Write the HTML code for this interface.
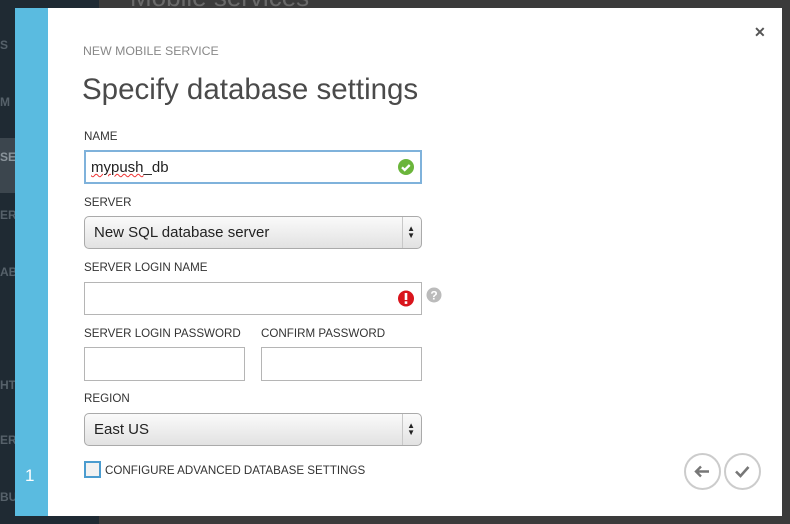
<!DOCTYPE html>
<html><head><style>
*{margin:0;padding:0;box-sizing:border-box}
body{width:790px;height:524px;overflow:hidden;background:#3b3b3b;font-family:"Liberation Sans",sans-serif;position:relative}
.side{position:absolute;left:0;top:0;width:99px;height:524px;background:#1f2a33}
.sel{position:absolute;left:0;top:138px;width:99px;height:55px;background:#3c464e}
.st{position:absolute;left:0;color:#56616a;font-size:12px;font-weight:bold}
.top{position:absolute;left:130px;top:-18px;color:#6a6a6a;font-size:26px}
.dlg{position:absolute;left:15px;top:8px;width:767px;height:508px;background:#fff}
.blue{position:absolute;left:0;top:0;width:33px;height:508px;background:#5abbe0}
.num{position:absolute;left:10px;top:458px;color:#fff;font-size:17px}
.a{position:absolute;font-size:11.6px;color:#333}
.in{position:absolute;border:1px solid #b5b5b5;background:#fff}
.dd{position:absolute;border:1px solid #aaa;border-radius:5px;background:linear-gradient(#fafafa,#e2e2e2);font-size:15px;color:#222;padding:7px 0 0 9px}
.dd:after{content:"";position:absolute;right:18px;top:0;bottom:0;border-left:1px solid #c8c8c8}
.ar{position:absolute;right:6px;top:8px;font-size:8px;line-height:7px;color:#222}
.circ{position:absolute;width:37px;height:37px;border:2px solid #ccc;border-radius:50%}
</style></head><body>
<div class="side"><div class="sel"></div>
<div class="st" style="top:38px">S</div><div class="st" style="top:95px">M</div><div class="st" style="top:150px;color:#8a949b">SE</div><div class="st" style="top:208px">ER</div><div class="st" style="top:265px">AB</div><div class="st" style="top:378px">HT</div><div class="st" style="top:433px">ER</div><div class="st" style="top:490px">BU</div></div>
<div class="top">Mobile services</div>
<div class="dlg">
<div class="blue"><div class="num">1</div></div>
<div class="a" style="left:68px;top:36px;color:#888;font-size:12.3px">NEW MOBILE SERVICE</div>
<div class="a" style="left:67px;top:65px;font-size:29.5px;color:#4a4a4a;font-weight:300">Specify database settings</div>
<div class="a" style="left:69px;top:122px">NAME</div>
<div class="in" style="left:69px;top:142px;width:338px;height:34px;border:2px solid #7fb2db;font-size:15px;padding:7px 0 0 5px;color:#222"><span style="text-decoration:underline wavy #e33;text-decoration-thickness:1px">mypush</span>_db
<svg style="position:absolute;right:6px;top:7px" width="16" height="16"><circle cx="8" cy="8" r="8" fill="#6bb53b"/><path d="M4 8.3l2.7 2.7 5-5" stroke="#fff" stroke-width="2.3" fill="none"/></svg></div>
<div class="a" style="left:69px;top:188px">SERVER</div>
<div class="dd" style="left:69px;top:208px;width:338px;height:33px">New SQL database server<div class="ar">▲<br>▼</div></div>
<div class="a" style="left:69px;top:253px">SERVER LOGIN NAME</div>
<div class="in" style="left:69px;top:274px;width:338px;height:33px"><svg style="position:absolute;right:7px;top:7px" width="16" height="17"><circle cx="8" cy="8.5" r="8" fill="#d9141c"/><rect x="6.7" y="3" width="2.6" height="7" fill="#fff"/><rect x="6.7" y="11.3" width="2.6" height="2.6" fill="#fff"/></svg></div>
<svg style="position:absolute;left:411px;top:279px" width="16" height="16"><circle cx="8" cy="8" r="7.5" fill="#bbb"/><text x="8" y="12.5" font-size="12" font-weight="bold" fill="#fff" text-anchor="middle" font-family="Liberation Sans">?</text></svg>
<div class="a" style="left:69px;top:319px">SERVER LOGIN PASSWORD</div>
<div class="a" style="left:246px;top:319px">CONFIRM PASSWORD</div>
<div class="in" style="left:69px;top:339px;width:161px;height:34px"></div>
<div class="in" style="left:246px;top:339px;width:161px;height:34px"></div>
<div class="a" style="left:69px;top:384px">REGION</div>
<div class="dd" style="left:69px;top:405px;width:338px;height:33px">East US<div class="ar">▲<br>▼</div></div>
<div style="position:absolute;left:69px;top:453px;width:17px;height:17px;border:2px solid #4b9ccf;background:#f2f2f2"></div>
<div class="a" style="left:90px;top:456px">CONFIGURE ADVANCED DATABASE SETTINGS</div>
<div style="position:absolute;left:739px;top:16px;font-size:14px;font-weight:bold;color:#555">✕</div>
<div class="circ" style="left:669px;top:445px"><svg width="33" height="33"><path d="M10 16.5h13M15 11.5l-5 5 5 5" stroke="#777" stroke-width="2.4" fill="none"/></svg></div>
<div class="circ" style="left:709px;top:445px"><svg width="33" height="33"><path d="M10 16.5l4.5 4.5 8-9" stroke="#777" stroke-width="2.6" fill="none"/></svg></div>
</div>
</body></html>
